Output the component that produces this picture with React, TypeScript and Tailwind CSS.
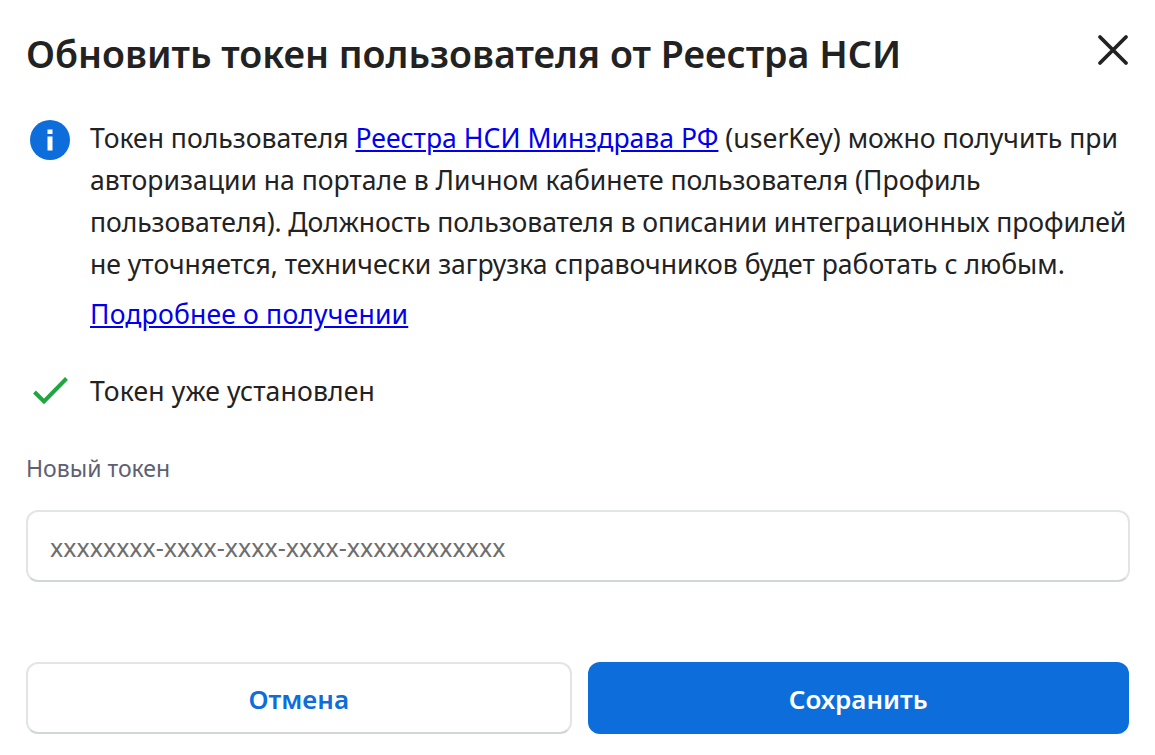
import React from "react";

const bodyFont = "font-['Noto_Sans',sans-serif]";

export default function App() {
  return (
    <div className={`flex h-[755px] w-[1155px] flex-col bg-white px-[26px] pt-[26px] ${bodyFont} text-[#222222]`}>
      <div className="flex items-center justify-between">
        <h1 className="whitespace-nowrap text-[37.6px] leading-[56px] font-semibold">
          Обновить токен пользователя от Реестра НСИ
        </h1>
        <svg width="32" height="32" viewBox="0 0 32 32" fill="none" className="mb-[8px]">
          <path d="M3 3L29 29M29 3L3 29" stroke="#222222" strokeWidth="3.8" strokeLinecap="round" />
        </svg>
      </div>

      <div className="mt-[23px] flex text-[26.55px] leading-[42px]">
        <div className="w-[64px] shrink-0 pt-[15px] pl-[4px]">
          <svg width="40" height="40" viewBox="0 0 40 40">
            <circle cx="20" cy="20" r="20" fill="#0D6EDB" />
            <rect x="17.5" y="16.5" width="5" height="14" fill="#fff" />
            <rect x="17.5" y="9.5" width="5" height="4.5" fill="#fff" />
          </svg>
        </div>
        <div className="whitespace-nowrap pt-[12px]">
          <p>
            Токен пользователя{" "}
            <a href="#" className="text-[#0000ee] underline">
              Реестра НСИ Минздрава РФ
            </a>{" "}
            (userKey) можно получить при
            <br />
            авторизации на портале в Личном кабинете пользователя (Профиль
            <br />
            <span className="tracking-[-0.09px]">
              пользователя). Должность пользователя в описании интеграционных профилей
            </span>
            <br />
            не уточняется, технически загрузка справочников будет работать с любым.
          </p>
          <a href="#" className="mt-[8px] block tracking-[0.18px] text-[#0000ee] underline">
            Подробнее о получении
          </a>
        </div>
      </div>

      <div className="mt-[35px] flex items-center text-[26.55px] leading-[42px]">
        <div className="w-[64px] shrink-0 pl-[6px]">
          <svg width="36" height="28" viewBox="0 0 36 28" fill="none">
            <path d="M2.5 15L12 24.5L34.5 1.5" stroke="#1EA73F" strokeWidth="4" />
          </svg>
        </div>
        <span className="tracking-[0.15px]">Токен уже установлен</span>
      </div>

      <label className="mt-[41px] text-[23px] leading-[30px] text-[#5d6072]">Новый токен</label>

      <div className="mt-[27px] flex h-[72px] w-[1104px] items-center rounded-[12px] border-2 border-[#e3e4e8] border-b-[#d2d5da] bg-white px-[22px]">
        <input
          placeholder="xxxxxxxx-xxxx-xxxx-xxxx-xxxxxxxxxxxx"
          className="mt-[3px] w-full bg-transparent text-[25px] outline-none placeholder:text-[#6e6e6e]"
        />
      </div>

      <div className="mt-[80px] flex gap-[16px]">
        <button className="h-[72px] w-[546px] rounded-[12px] border-2 border-[#e3e4e8] border-b-[#d2d5da] bg-white pt-[2px] text-[26px] font-semibold text-[#0d6edb]">
          Отмена
        </button>
        <button className="h-[72px] w-[542px] rounded-[12px] bg-[#0d6edb] pt-[2px] text-[26px] font-semibold text-white">
          Сохранить
        </button>
      </div>
    </div>
  );
}
